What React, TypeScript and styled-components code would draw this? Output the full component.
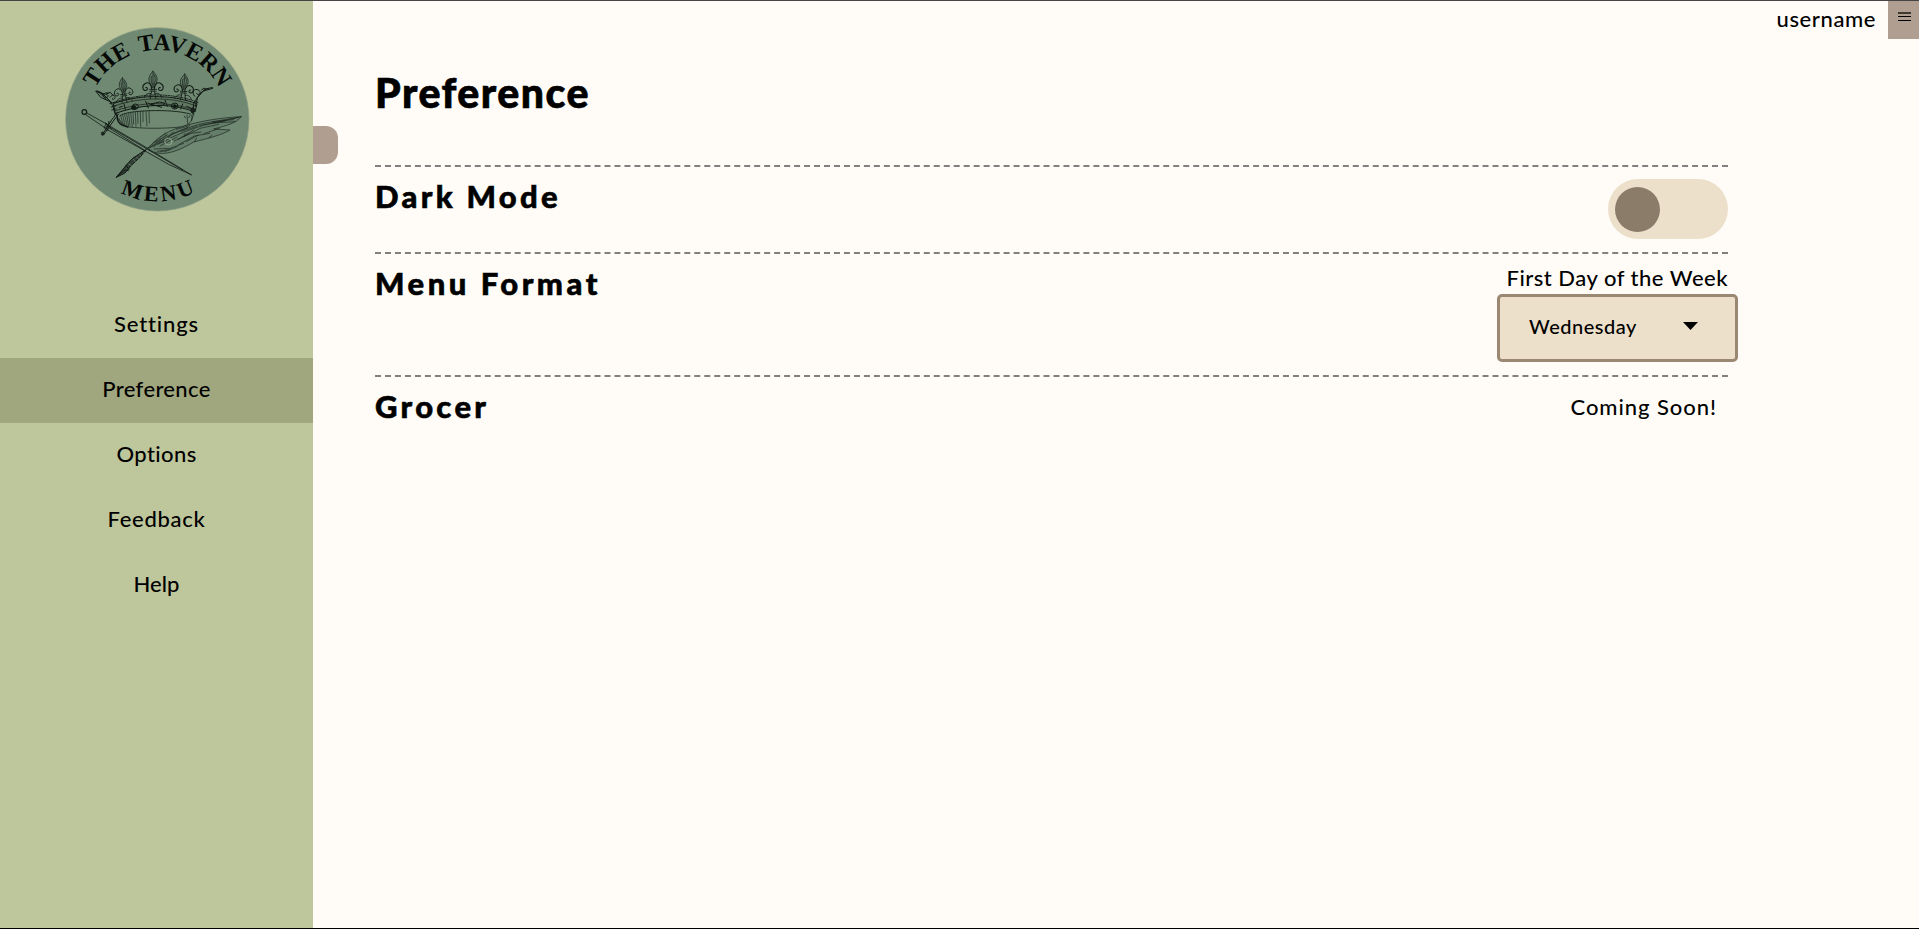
import React from 'react';
import styled, { createGlobalStyle } from 'styled-components';

const GlobalStyle = createGlobalStyle`
  * { box-sizing: border-box; }
  body { margin: 0; background: #fffcf7; }
`;

const Page = styled.div`
  display: flex;
  height: 929px;
  border-top: 1px solid #444;
  border-bottom: 1px solid #000;
  background: #fffcf7;
  color: #000;
  font-family: Lato, 'Open Sans', sans-serif;
  font-weight: 500;
  font-size: 22px;
  overflow: hidden;
`;

const Sidebar = styled.aside`
  width: 313px;
  flex: none;
  background: #bec69c;
  display: flex;
  flex-direction: column;
  align-items: center;
  padding-top: 26px;
`;

const LogoSvg = styled.svg`
  display: block;
  width: 185px;
  height: 185px;
  margin-left: 1px;
  flex: none;
`;

const Nav = styled.nav`
  width: 100%;
  margin-top: 81px;
`;

const NavItem = styled.a<{ $active?: boolean; $spacing: number }>`
  display: flex;
  align-items: center;
  justify-content: center;
  height: 65px;
  padding-bottom: 4px;
  background: ${(p) => (p.$active ? '#a0a77f' : 'transparent')};
  letter-spacing: ${(p) => p.$spacing}px;
`;

const Handle = styled.button`
  flex: none;
  width: 25px;
  height: 38px;
  margin: 125px 0 0;
  padding: 0;
  border: 0;
  border-radius: 0 12px 12px 0;
  background: #b09e90;
`;

const Main = styled.main`
  flex: 1;
  display: flex;
  flex-direction: column;
`;

const TopBar = styled.header`
  display: flex;
  justify-content: flex-end;
  height: 38px;
`;

const UserName = styled.span`
  line-height: 36px;
  margin-right: 12px;
  letter-spacing: 0.6px;
`;

const MenuButton = styled.button`
  display: flex;
  align-items: flex-start;
  width: 31px;
  height: 38px;
  padding: 11px 0 0 10px;
  border: 0;
  background: #b09e90;
`;

const Content = styled.section`
  width: 1353px;
  margin-left: 37px;
`;

const Title = styled.h1`
  margin: 0;
  height: 126px;
  padding-top: 28px;
  font-size: 41px;
  line-height: 52px;
  font-weight: 900;
  letter-spacing: 1.5px;
  -webkit-text-stroke: 0.7px #000;
`;

const Row = styled.div<{ $height: number }>`
  display: flex;
  justify-content: space-between;
  align-items: flex-start;
  height: ${(p) => p.$height}px;
  border-top: 2px dashed #808080;
  padding-top: 12px;
`;

const RowTitle = styled.h2<{ $spacing: number }>`
  margin: -2px 0 0;
  font-size: 31px;
  line-height: 38px;
  font-weight: 900;
  letter-spacing: ${(p) => p.$spacing}px;
  -webkit-text-stroke: 0.6px #000;
`;

const Toggle = styled.div`
  width: 120px;
  height: 60px;
  border-radius: 30px;
  background: #ede0cb;
  padding: 8px 7px;
`;

const Knob = styled.div`
  width: 45px;
  height: 45px;
  border-radius: 50%;
  background: #8a7c69;
`;

const Field = styled.div`
  display: flex;
  flex-direction: column;
  align-items: flex-end;
`;

const FieldLabel = styled.label`
  height: 28px;
  line-height: 24px;
  letter-spacing: 0.5px;
`;

const SelectBox = styled.div`
  display: flex;
  align-items: center;
  justify-content: space-between;
  width: 241px;
  height: 68px;
  margin-right: -10px;
  padding: 0 37px 4px 29px;
  border: 3px solid #9b8873;
  border-radius: 5px;
  background: #ede0cb;
  font-size: 20px;
  letter-spacing: 0.5px;
`;

const Note = styled.span`
  line-height: 36px;
  margin-right: 11px;
  letter-spacing: 0.95px;
`;

const Fleur = ({ x, y, s, r = 0 }: { x: number; y: number; s: number; r?: number }) => (
  <g transform={`translate(${x} ${y}) rotate(${r}) scale(${s})`}>
    <path d="M0 -48C-8 -39 -15 -29 -10 -17C-7 -9 -3 -7 0 0C3 -7 7 -9 10 -17C15 -29 8 -39 0 -48Z" fill="#637b67" />
    <path d="M0 -44V-5M3 -38C9 -28 7 -18 2 -9M-4 -33C-8 -25 -4 -17 -2 -10" />
    <path d="M-3 5C-5 -12 -13 -18 -22 -13C-34 -6 -29 9 -20 7C-13 5 -16 -3 -21 -1M3 5C5 -12 13 -18 22 -13C34 -6 29 9 20 7C13 5 16 -3 21 -1" strokeWidth="3" />
    <path d="M-10 4H10M-9 9H9M-4 9L-8 30M4 9L8 30M-6 16C-16 13 -22 19 -25 27M6 16C16 13 22 19 25 27" strokeWidth="2.4" />
  </g>
);

const Logo = () => (
  <LogoSvg viewBox="44 37 555 555" fill="none" stroke="#111a14" strokeLinecap="round" strokeLinejoin="round">
    <circle cx="321" cy="314" r="275" fill="#6f8973" stroke="#8d9f83" strokeWidth="2" />
    <defs>
      <path id="arcTop" d="M113 314A208 208 0 0 1 529 314" />
      <path id="arcBottom" d="M75 314A246 246 0 0 0 567 314" />
    </defs>
    <g fill="#050805" stroke="none" fontFamily="'Liberation Serif', serif" fontWeight="700">
      <text fontSize="71" wordSpacing="10">
        <textPath href="#arcTop" startOffset="97" textLength="460" lengthAdjust="spacing">THE TAVERN</textPath>
      </text>
      <text fontSize="66">
        <textPath href="#arcBottom" startOffset="272" textLength="232" lengthAdjust="spacing">MENU</textPath>
      </text>
    </g>

    <g strokeWidth="2">
      <path d="M190 266C235 252 280 244 327 246C370 247 404 255 440 267L434 292C395 277 350 270 307 273C268 275 229 284 196 296Z" fill="#617963" strokeWidth="3" />
      <path d="M191 274C235 259 280 252 327 253C370 254 404 261 437 274M196 288C235 275 275 267 316 267C360 267 400 275 434 286" />
      <path d="M188 264C235 248 282 240 326 241C371 242 407 250 443 263" strokeWidth="3" strokeDasharray="4 4" />
      <path d="M196 297C205 319 216 333 236 337C281 342 341 342 390 337C412 334 427 325 430 292" />
      <path d="M200 299C199 325 211 332 232 337" strokeWidth="4" />
      <path d="M208 304C216 295 250 290 299 288C345 287 387 289 420 298" strokeWidth="2.6" />
      <path d="M205 310L214 326M211 303L219 331M217 301L224 333M223 299L230 334M229 298L235 335M235 296L239 332M241 295L246 336M248 294L250 328M255 293L257 335M262 292L263 326M270 291L271 336M278 291V321M287 291L290 334M296 290L297 325" strokeWidth="1.8" />
      <path d="M420 302L415 309M425 300L424 317M410 301L412 326M402 304L405 310" />
      <path d="M140 228C158 238 175 251 187 273L195 300M137 230L166 239L180 233L190 244M137 230L151 248L184 263" strokeWidth="3" />
      <path d="M143 231L168 254M148 231L173 252M155 235L178 258M174 235C158 230 154 248 165 249C175 250 177 238 168 240M179 248C185 237 197 240 194 250C191 258 183 256 187 250M178 267L194 263M182 277L198 273M184 286L198 283" strokeWidth="2.5" />
      <path d="M487 219C461 219 444 238 430 268L427 294M487 221L459 229L442 248L435 275M433 245C421 232 432 218 446 227C455 235 445 244 439 237M454 226C459 216 468 222 464 227M474 222L461 223M422 280L430 288M422 292L431 298" strokeWidth="3" />
      <path d="M246 276A9 8 0 1 0 264 276A9 8 0 1 0 246 276M363 274A10 9 0 1 0 383 274A10 9 0 1 0 363 274" strokeWidth="3" />
      <ellipse cx="250" cy="279" rx="7" ry="6" fill="#111a14" />
      <ellipse cx="373" cy="275" rx="5" ry="5" fill="#111a14" />
      <path d="M293 265L307 273L337 272L344 266L328 262L301 268L334 278M286 260L294 280M344 257L351 275M221 267L225 285M397 268L391 283M409 275L419 279M207 278L216 275" strokeWidth="3" />
      <ellipse cx="427" cy="286" rx="6" ry="7" fill="#172019" />
      <Fleur x={220} y={235} s={0.95} r={-5} />
      <Fleur x={308} y={220} s={1.05} />
      <Fleur x={400} y={226} s={1} r={4} />
    </g>

    <g strokeWidth="2.4">
      <circle cx="102" cy="292" r="7" fill="#6f8973" strokeWidth="3.5" />
      <path d="M108 294L172 330L165 340L106 300" />
      <path d="M168 328L292 401L424 481L355 449L162 340ZM178 337L397 466M170 336L285 408" />
      <path d="M201 294C193 300 193 307 186 313L157 358M205 298C199 306 193 313 187 322L160 360M166 325L183 342M176 320L172 347" strokeWidth="3" />
      <ellipse cx="157" cy="357" rx="4" ry="5" fill="#253027" />
    </g>

    <path d="M292 401C323 366 354 347 404 333C461 317 513 309 573 306C557 326 527 333 490 343L539 346C515 361 470 372 430 382C386 408 344 425 310 412Z" fill="#657e69" strokeWidth="1.8" />
    <g strokeWidth="1.8">
      <path d="M199 487L237 441L292 401C351 373 407 347 460 332C500 322 535 316 573 306M296 401C352 360 410 338 460 326L564 308" />
      <path d="M316 382L351 361M323 389L359 371M329 394L380 367M312 403L359 401L400 386M321 410L362 404M339 385L364 358L412 338M371 379L418 357M384 374L430 346M385 390L432 364L478 356M408 381L444 361M401 366L449 341L505 329M461 357L507 341M448 332L524 319M486 321L550 315M488 325L554 321M433 381L439 370M476 369L485 362" />
      <path d="M300 394L345 355M305 395L348 360M309 397L370 352M378 344L418 333M393 350L440 335M344 410L381 396M330 411L355 407M401 359L452 352" stroke="#304035" strokeWidth="2.8" />
      <ellipse cx="354" cy="381" rx="11" ry="10" stroke="#93a58c" strokeWidth="3" />
    </g>
    <path d="M199 487L230 449L247 431L287 405L269 428L244 451L225 474Z" fill="#354239" strokeWidth="3" />
    <path d="M235 448L243 453M249 434L256 442M258 427L266 434M268 420L274 427M280 413L283 418" stroke="#71826f" strokeWidth="2" />
    <path d="M198 488L224 466L234 468M228 453L236 464" strokeWidth="3" />
  </LogoSvg>
);

const navItems = [
  { label: 'Settings', spacing: 0.85 },
  { label: 'Preference', spacing: 0.35, active: true },
  { label: 'Options', spacing: 0.4 },
  { label: 'Feedback', spacing: 0.7 },
  { label: 'Help', spacing: 0.1 },
];

export default function App() {
  return (
    <>
      <GlobalStyle />
      <Page>
        <Sidebar>
          <Logo />
          <Nav>
            {navItems.map((item) => (
              <NavItem key={item.label} $active={item.active} $spacing={item.spacing}>
                {item.label}
              </NavItem>
            ))}
          </Nav>
        </Sidebar>
        <Handle aria-label="Toggle sidebar" />
        <Main>
          <TopBar>
            <UserName>username</UserName>
            <MenuButton aria-label="Menu">
              <svg width="13" height="10" stroke="#000">
                <path d="M0 1H13" stroke="#40382f" strokeWidth="2" />
                <path d="M0 4.5H13M0 8.5H13" strokeWidth="1.2" />
              </svg>
            </MenuButton>
          </TopBar>
          <Content>
            <Title>Preference</Title>
            <Row $height={87}>
              <RowTitle $spacing={3.3}>Dark Mode</RowTitle>
              <Toggle role="switch" aria-checked={false}>
                <Knob />
              </Toggle>
            </Row>
            <Row $height={123}>
              <RowTitle $spacing={3.5}>Menu Format</RowTitle>
              <Field>
                <FieldLabel>First Day of the Week</FieldLabel>
                <SelectBox>
                  Wednesday
                  <svg width="15" height="8">
                    <path d="M0 0H15L7.5 8Z" fill="#000" />
                  </svg>
                </SelectBox>
              </Field>
            </Row>
            <Row $height={80}>
              <RowTitle $spacing={3.3}>Grocer</RowTitle>
              <Note>Coming Soon!</Note>
            </Row>
          </Content>
        </Main>
      </Page>
    </>
  );
}
